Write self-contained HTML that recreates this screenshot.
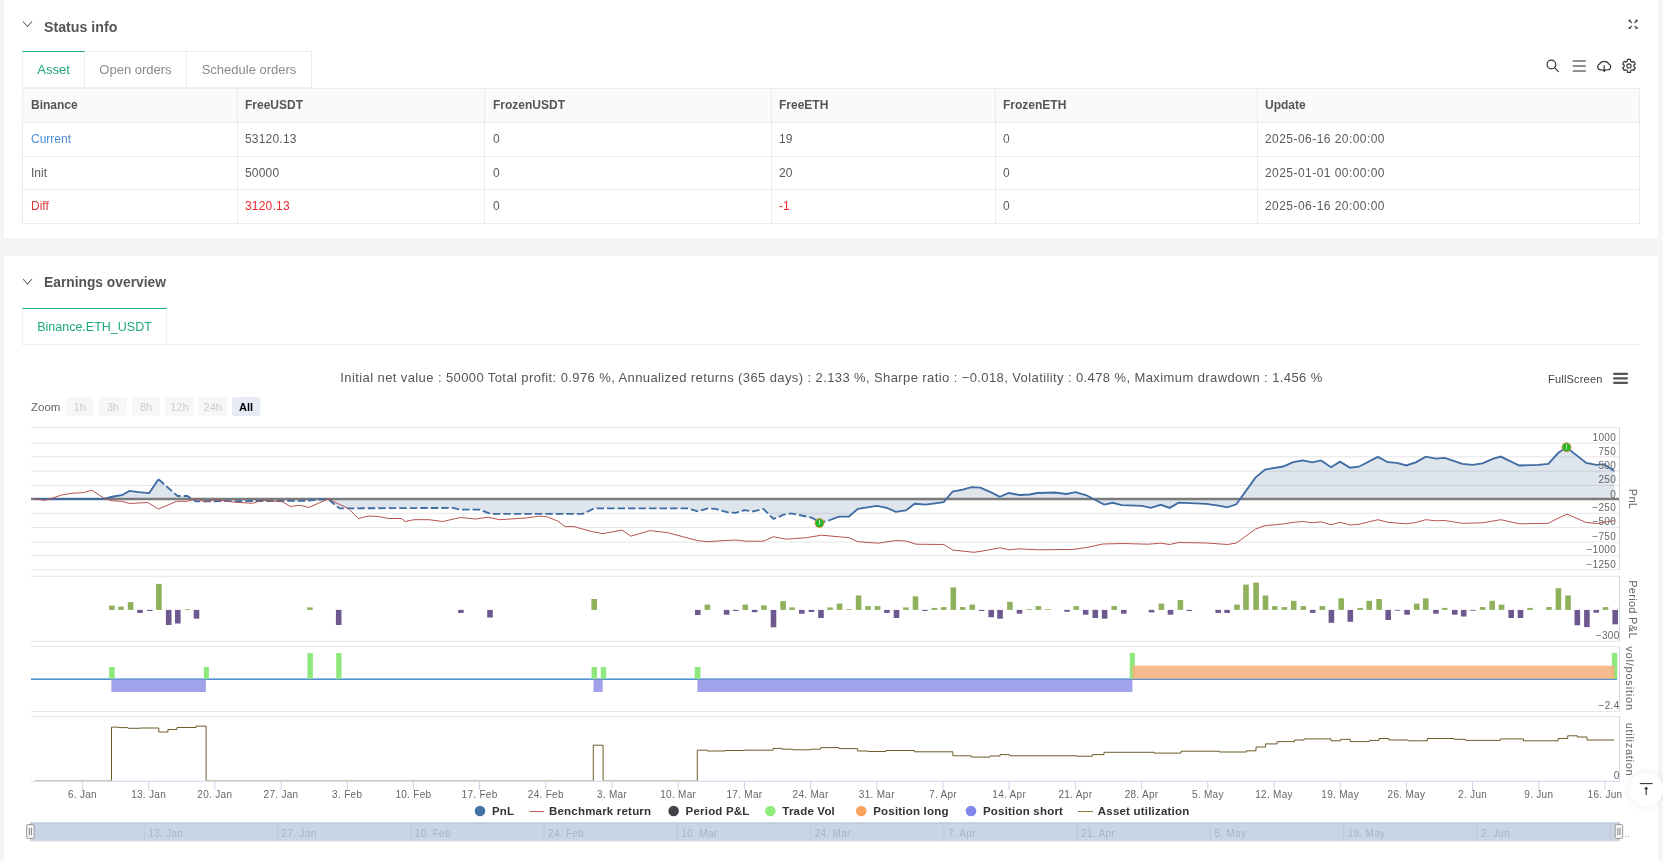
<!DOCTYPE html>
<html><head><meta charset="utf-8">
<style>
*{box-sizing:border-box;margin:0;padding:0}
html,body{-webkit-font-smoothing:antialiased;width:1663px;height:861px;overflow:hidden;background:#f4f5f7;font-family:"Liberation Sans",sans-serif;color:#555}
.card{position:absolute;left:4px;width:1654px;background:#fff;will-change:transform}
#c1{top:0;height:238px}
#c2{top:256px;height:620px}
.abs{position:absolute}
.title{position:absolute;font-size:13.8px;font-weight:bold;color:#555;white-space:nowrap;line-height:18px}
.tab{position:absolute;top:51px;height:37px;border:1px solid #eee;border-left:none;font-size:13px;color:#8a8a8a;line-height:35px;text-align:center;white-space:nowrap}
.tab.first{border-left:1px solid #eee}
.tab.act{color:#1fa67c;border-top:1px solid #1fae80}
.cell{position:absolute;font-size:12px;white-space:nowrap;line-height:14px;color:#5a5a5a}
.hd{font-weight:bold;color:#555}
.hl{position:absolute;height:1px;background:#ececec}
.vl{position:absolute;width:1px;background:#ececec}
.blue{color:#4a8fd8}.red{color:#f0262f}
svg text.yl{font-size:10px;fill:#666;letter-spacing:0.3px}
svg text.yt{font-size:11px;fill:#666;letter-spacing:0.3px}
svg text.xl{font-size:10px;fill:#666;letter-spacing:0.3px}
svg text.lg{font-size:11.5px;font-weight:bold;fill:#333;letter-spacing:0.2px}
svg text.nl{font-size:10px;fill:#a9b4c2;letter-spacing:0.3px}
</style></head><body>
<div class="card" id="c1">
  <div class="title" style="left:40px;top:17.5px;font-size:14.2px">Status info</div>
  <div class="tab first act" style="left:18px;width:63px">Asset</div>
  <div class="tab" style="left:81px;width:102px">Open orders</div>
  <div class="tab" style="left:183px;width:125px">Schedule orders</div>
  <!-- table -->
  <div class="abs" style="left:18px;top:88px;width:1618px;height:34px;background:#fafafa"></div>
  <div class="hl" style="left:18px;top:88px;width:1618px"></div>
  <div class="hl" style="left:18px;top:122px;width:1618px"></div>
  <div class="hl" style="left:18px;top:156px;width:1618px"></div>
  <div class="hl" style="left:18px;top:189px;width:1618px"></div>
  <div class="hl" style="left:18px;top:223px;width:1618px"></div>
  <div class="vl" style="left:18px;top:88px;height:136px"></div>
  <div class="vl" style="left:233px;top:88px;height:136px"></div>
  <div class="vl" style="left:480px;top:88px;height:136px"></div>
  <div class="vl" style="left:767px;top:88px;height:136px"></div>
  <div class="vl" style="left:991px;top:88px;height:136px"></div>
  <div class="vl" style="left:1253px;top:88px;height:136px"></div>
  <div class="vl" style="left:1635px;top:88px;height:136px"></div>
  <div class="cell hd" style="left:27px;top:98px">Binance</div>
  <div class="cell hd" style="left:241px;top:98px">FreeUSDT</div>
  <div class="cell hd" style="left:489px;top:98px">FrozenUSDT</div>
  <div class="cell hd" style="left:775px;top:98px">FreeETH</div>
  <div class="cell hd" style="left:999px;top:98px">FrozenETH</div>
  <div class="cell hd" style="left:1261px;top:98px">Update</div>

  <div class="cell blue" style="left:27px;top:132px">Current</div>
  <div class="cell" style="left:241px;top:132px;letter-spacing:0.2px">53120.13</div>
  <div class="cell" style="left:489px;top:132px">0</div>
  <div class="cell" style="left:775px;top:132px">19</div>
  <div class="cell" style="left:999px;top:132px">0</div>
  <div class="cell" style="left:1261px;top:132px;letter-spacing:0.45px">2025-06-16 20:00:00</div>

  <div class="cell" style="left:27px;top:166px">Init</div>
  <div class="cell" style="left:241px;top:166px;letter-spacing:0.2px">50000</div>
  <div class="cell" style="left:489px;top:166px">0</div>
  <div class="cell" style="left:775px;top:166px">20</div>
  <div class="cell" style="left:999px;top:166px">0</div>
  <div class="cell" style="left:1261px;top:166px;letter-spacing:0.45px">2025-01-01 00:00:00</div>

  <div class="cell" style="left:27px;top:199px;color:#d9363e">Diff</div>
  <div class="cell red" style="left:241px;top:199px;letter-spacing:0.2px">3120.13</div>
  <div class="cell" style="left:489px;top:199px">0</div>
  <div class="cell red" style="left:775px;top:199px">-1</div>
  <div class="cell" style="left:999px;top:199px">0</div>
  <div class="cell" style="left:1261px;top:199px;letter-spacing:0.45px">2025-06-16 20:00:00</div>
</div>
<div class="card" id="c2">
  <div class="title" style="left:40px;top:18px">Earnings overview</div>
  <div class="tab first act" style="left:18px;top:52px;width:145px;font-size:12.5px;line-height:37px;color:#1fa87c">Binance.ETH_USDT</div>
  <div class="abs" style="left:163px;top:88px;width:1473px;height:1px;background:#eee"></div>
</div>
<svg class="abs" style="left:0;top:0;will-change:transform" width="1663" height="861" viewBox="0 0 1663 861">
  <!-- chevrons -->
  <polyline points="23,21.5 27.5,26.5 32,21.5" fill="none" stroke="#666" stroke-width="1.1"/>
  <polyline points="23,279 27.5,284 32,279" fill="none" stroke="#666" stroke-width="1.1"/>
  <!-- fullscreen icon -->
  <g stroke="#444" stroke-width="1.2" fill="#444">
    <line x1="1629.3" y1="20.3" x2="1632" y2="23"/><path d="M1628.5 19.5 L1631.2 19.8 L1628.8 22.2 Z" stroke="none"/>
    <line x1="1637" y1="20.3" x2="1634.5" y2="23"/><path d="M1637.8 19.5 L1635.1 19.8 L1637.5 22.2 Z" stroke="none"/>
    <line x1="1629.3" y1="28.3" x2="1631.8" y2="25.8"/><path d="M1628.5 29.1 L1631.2 28.8 L1628.8 26.4 Z" stroke="none"/>
    <line x1="1637" y1="28.3" x2="1634.6" y2="25.8"/><path d="M1637.8 29.1 L1635.1 28.8 L1637.5 26.4 Z" stroke="none"/>
  </g>
  <!-- toolbar icons -->
  <g fill="none" stroke="#3a3a3a" stroke-width="1.2">
    <circle cx="1551.4" cy="64.5" r="4.3"/><line x1="1554.5" y1="67.6" x2="1558.7" y2="71.8"/>
  </g>
  <g stroke="#555" stroke-width="1.3"><line x1="1572.8" y1="61" x2="1585.8" y2="61"/><line x1="1572.8" y1="66" x2="1585.8" y2="66"/><line x1="1572.8" y1="71" x2="1585.8" y2="71"/></g>
  <g fill="none" stroke="#3a3a3a" stroke-width="1.2">
    <path d="M1602.2 69.8 H1600.6 A2.9 2.9 0 0 1 1599.3 64.3 A5.6 5.6 0 0 1 1609.1 64.3 A2.9 2.9 0 0 1 1607.8 69.8 H1606.3"/>
    <path d="M1604.2 65.2 V71.3 M1602.5 69.5 L1604.2 71.3 L1605.9 69.5"/>
    <path d="M1627.52 59.47 L1630.48 59.47 L1630.68 61.30 L1632.15 62.15 L1633.83 61.40 L1635.31 63.97 L1633.83 65.05 L1633.83 66.75 L1635.31 67.83 L1633.83 70.40 L1632.15 69.65 L1630.68 70.50 L1630.48 72.33 L1627.52 72.33 L1627.32 70.50 L1625.85 69.65 L1624.17 70.40 L1622.69 67.83 L1624.17 66.75 L1624.17 65.05 L1622.69 63.97 L1624.17 61.40 L1625.85 62.15 L1627.32 61.30 Z" stroke-linejoin="round"/>
    <circle cx="1629" cy="65.9" r="2.1"/>
  </g>
  <text x="831.5" y="382" text-anchor="middle" style="font-size:13px;fill:#555;letter-spacing:0.4px">Initial net value : 50000 Total profit: 0.976 %, Annualized returns (365 days) : 2.133 %, Sharpe ratio : −0.018, Volatility : 0.478 %, Maximum drawdown : 1.456 %</text>
  <text x="1548" y="383" style="font-size:11px;fill:#444;letter-spacing:0.2px">FullScreen</text>
  <g stroke="#555" stroke-width="2.2" stroke-linecap="round"><line x1="1614" y1="373.8" x2="1627" y2="373.8"/><line x1="1614" y1="378.3" x2="1627" y2="378.3"/><line x1="1614" y1="382.8" x2="1627" y2="382.8"/></g>
  <text x="31" y="411" style="font-size:11.5px;fill:#666">Zoom</text>
  <g style="font-size:11px">
    <rect x="65.6" y="397" width="28.3" height="19" rx="2" fill="#f7f7f7"/><text x="79.7" y="410.5" text-anchor="middle" fill="#ccc">1h</text>
    <rect x="98.7" y="397" width="28.3" height="19" rx="2" fill="#f7f7f7"/><text x="112.8" y="410.5" text-anchor="middle" fill="#ccc">3h</text>
    <rect x="132" y="397" width="28.3" height="19" rx="2" fill="#f7f7f7"/><text x="146.1" y="410.5" text-anchor="middle" fill="#ccc">8h</text>
    <rect x="165.3" y="397" width="28.3" height="19" rx="2" fill="#f7f7f7"/><text x="179.4" y="410.5" text-anchor="middle" fill="#ccc">12h</text>
    <rect x="198.6" y="397" width="28.3" height="19" rx="2" fill="#f7f7f7"/><text x="212.7" y="410.5" text-anchor="middle" fill="#ccc">24h</text>
    <rect x="232" y="397" width="28.3" height="19" rx="2" fill="#e6ebf5"/><text x="246.1" y="410.5" text-anchor="middle" fill="#000" font-weight="bold">All</text>
  </g>
<line x1="31" y1="427.5" x2="1619.5" y2="427.5" stroke="#e6e6e6" stroke-width="1"/>
<line x1="31" y1="443.2" x2="1619.5" y2="443.2" stroke="#e6e6e6" stroke-width="1"/>
<line x1="31" y1="456.8" x2="1619.5" y2="456.8" stroke="#e6e6e6" stroke-width="1"/>
<line x1="31" y1="471.2" x2="1619.5" y2="471.2" stroke="#e6e6e6" stroke-width="1"/>
<line x1="31" y1="485.4" x2="1619.5" y2="485.4" stroke="#e6e6e6" stroke-width="1"/>
<line x1="31" y1="513.3" x2="1619.5" y2="513.3" stroke="#e6e6e6" stroke-width="1"/>
<line x1="31" y1="527.4" x2="1619.5" y2="527.4" stroke="#e6e6e6" stroke-width="1"/>
<line x1="31" y1="542.0" x2="1619.5" y2="542.0" stroke="#e6e6e6" stroke-width="1"/>
<line x1="31" y1="555.7" x2="1619.5" y2="555.7" stroke="#e6e6e6" stroke-width="1"/>
<line x1="31" y1="569.6" x2="1619.5" y2="569.6" stroke="#e6e6e6" stroke-width="1"/>
<polygon points="34.0,499.0 34.0,499.0 103.3,499.0 113.4,496.5 121.8,495.2 129.5,490.9 138.7,492.2 149.2,493.1 158.5,479.3 177.6,496.0 187.2,496.0 195.9,501.3 304.1,500.8 328.1,499.0 339.4,508.4 452.8,507.9 460.4,509.6 479.3,509.6 490.7,513.9 582.9,513.9 594.2,508.4 687.7,508.4 697.8,511.4 707.9,508.4 715.5,508.9 728.0,512.4 735.7,512.9 744.5,510.2 753.3,511.4 763.4,508.9 773.5,519.0 783.6,514.7 791.2,513.4 806.4,516.5 812.7,518.0 819.5,523.0 828.8,520.5 838.9,516.7 849.0,516.5 857.9,508.9 876.8,505.9 886.9,507.9 895.8,511.9 905.9,510.4 914.7,503.8 926.0,504.6 943.7,502.1 952.6,491.5 962.7,489.7 971.5,487.2 980.4,487.7 991.7,492.7 999.8,496.8 1008.9,493.0 1019.5,495.0 1029.6,494.5 1037.2,493.0 1054.8,492.5 1066.2,494.0 1075.6,492.2 1086.4,495.3 1104.1,504.6 1112.9,502.8 1121.8,505.1 1142.0,505.9 1150.8,507.9 1160.9,504.8 1169.7,507.9 1178.6,502.6 1206.4,503.8 1220.0,505.9 1227.1,507.4 1236.4,504.3 1255.4,477.6 1265.0,469.5 1283.1,466.5 1293.2,462.2 1302.8,460.4 1312.2,462.4 1321.0,460.4 1331.1,467.2 1340.0,461.7 1350.0,467.7 1358.9,466.7 1377.8,456.9 1387.9,462.2 1396.8,462.9 1406.4,465.5 1415.7,462.4 1425.8,456.6 1435.9,458.6 1444.7,457.9 1462.4,463.9 1472.5,464.9 1482.6,463.4 1492.7,458.9 1500.8,456.6 1519.2,465.5 1538.2,464.9 1548.3,463.9 1558.4,452.8 1566.5,447.3 1586.2,462.9 1596.3,464.9 1603.8,464.2 1614.4,471.0 1614.4,499.0" fill="rgb(60,100,150)" fill-opacity="0.17"/>
<line x1="31" y1="499" x2="1619.5" y2="499" stroke="#7b7b7b" stroke-width="2.6"/>
<polyline points="34.0,499.0 103.3,499.0 113.4,496.5 121.8,495.2 129.5,490.9 138.7,492.2 149.2,493.1 158.5,479.3" fill="none" stroke="#3e6ca3" stroke-width="1.85"/>
<polyline points="158.5,479.3 177.6,496.0 187.2,496.0 195.9,501.3 304.1,500.8 328.1,499.0 339.4,508.4 452.8,507.9 460.4,509.6 479.3,509.6 490.7,513.9 582.9,513.9 594.2,508.4 687.7,508.4 697.8,511.4 707.9,508.4 715.5,508.9 728.0,512.4 735.7,512.9 744.5,510.2 753.3,511.4 763.4,508.9 773.5,519.0 783.6,514.7 791.2,513.4 806.4,516.5 812.7,518.0 819.5,523.0 828.8,520.5" fill="none" stroke="#3e6ca3" stroke-width="1.85" stroke-dasharray="7.5,3"/>
<polyline points="828.8,520.5 838.9,516.7 849.0,516.5 857.9,508.9 876.8,505.9 886.9,507.9 895.8,511.9 905.9,510.4 914.7,503.8 926.0,504.6 943.7,502.1 952.6,491.5 962.7,489.7 971.5,487.2 980.4,487.7 991.7,492.7 999.8,496.8 1008.9,493.0 1019.5,495.0 1029.6,494.5 1037.2,493.0 1054.8,492.5 1066.2,494.0 1075.6,492.2 1086.4,495.3 1104.1,504.6 1112.9,502.8 1121.8,505.1 1142.0,505.9 1150.8,507.9 1160.9,504.8 1169.7,507.9 1178.6,502.6 1206.4,503.8 1220.0,505.9 1227.1,507.4 1236.4,504.3 1255.4,477.6 1265.0,469.5 1283.1,466.5 1293.2,462.2 1302.8,460.4 1312.2,462.4 1321.0,460.4 1331.1,467.2 1340.0,461.7 1350.0,467.7 1358.9,466.7 1377.8,456.9 1387.9,462.2 1396.8,462.9 1406.4,465.5 1415.7,462.4 1425.8,456.6 1435.9,458.6 1444.7,457.9 1462.4,463.9 1472.5,464.9 1482.6,463.4 1492.7,458.9 1500.8,456.6 1519.2,465.5 1538.2,464.9 1548.3,463.9 1558.4,452.8 1566.5,447.3 1586.2,462.9 1596.3,464.9 1603.8,464.2 1614.4,471.0" fill="none" stroke="#3e6ca3" stroke-width="1.85"/>
<polyline points="34.0,499.0 45.3,500.3 62.9,494.7 73.0,493.2 83.1,492.7 91.9,490.2 103.5,497.9 112.1,500.8 121.8,501.3 129.5,503.5 147.7,502.5 158.5,509.0 176.6,501.3 187.2,501.3 195.9,498.6 205.5,501.8 215.1,499.6 234.4,502.2 252.3,503.3 262.4,500.3 282.6,501.8 290.2,506.4 300.3,505.4 309.1,507.4 328.1,499.0 348.3,508.4 358.4,518.5 368.5,516.0 378.6,516.5 388.7,518.5 401.3,518.5 405.1,521.5 414.0,519.7 429.1,519.7 442.7,521.5 460.4,517.5 475.6,519.0 488.2,517.2 499.5,519.7 526.0,518.0 538.7,516.2 546.3,516.5 557.6,521.0 565.2,526.6 574.0,526.6 591.7,531.6 603.0,533.6 622.0,530.1 630.9,536.2 649.8,530.6 667.5,532.6 697.8,540.7 707.9,541.7 723.0,540.7 735.7,540.0 745.8,541.2 763.4,541.2 773.5,536.7 786.2,539.2 806.4,537.7 821.5,535.2 849.0,537.7 857.9,541.7 878.1,543.2 895.8,540.5 905.9,541.0 916.0,544.2 943.7,544.5 952.6,550.0 974.0,552.3 984.1,550.8 999.8,547.8 1009.4,549.8 1019.5,548.8 1037.2,549.8 1072.5,549.5 1087.7,547.3 1102.8,544.0 1123.0,543.5 1148.3,544.2 1160.9,543.2 1169.7,544.5 1178.6,542.5 1206.4,543.0 1227.6,544.5 1236.4,543.0 1255.4,529.1 1265.0,525.6 1283.1,524.0 1293.2,522.3 1302.8,521.5 1312.2,522.8 1321.0,521.8 1331.1,524.8 1340.0,522.3 1350.0,525.0 1358.9,524.3 1377.8,519.7 1387.9,522.3 1406.4,523.8 1415.7,522.5 1425.8,519.7 1435.9,520.8 1444.7,520.5 1462.4,523.3 1482.6,522.8 1500.8,519.7 1519.2,523.8 1548.3,523.3 1558.4,518.0 1567.2,514.2 1586.2,522.5 1596.3,523.5 1614.4,520.5" fill="none" stroke="#b5524f" stroke-width="1"/>
<circle cx="819.5" cy="523" r="4.5" fill="#22b82a" stroke="#f08040" stroke-width="0.8"/>
<line x1="819.5" y1="520" x2="819.5" y2="525" stroke="#e8f5e8" stroke-width="0.8"/>
<circle cx="1566.5" cy="447.3" r="4.5" fill="#22b82a" stroke="#f08040" stroke-width="0.8"/>
<line x1="1566.5" y1="444.3" x2="1566.5" y2="449.3" stroke="#e8f5e8" stroke-width="0.8"/>
<line x1="1619.5" y1="427" x2="1619.5" y2="570" stroke="#d0d8ea" stroke-width="1"/>
<text x="1616" y="441" text-anchor="end" class="yl">1000</text>
<text x="1616" y="454.5" text-anchor="end" class="yl">750</text>
<text x="1616" y="469" text-anchor="end" class="yl">500</text>
<text x="1616" y="483" text-anchor="end" class="yl">250</text>
<text x="1616" y="497.5" text-anchor="end" class="yl">0</text>
<text x="1616" y="511" text-anchor="end" class="yl">−250</text>
<text x="1616" y="525" text-anchor="end" class="yl">−500</text>
<text x="1616" y="539.5" text-anchor="end" class="yl">−750</text>
<text x="1616" y="553" text-anchor="end" class="yl">−1000</text>
<text x="1616" y="567.5" text-anchor="end" class="yl">−1250</text>
<text transform="translate(1629,499) rotate(90)" text-anchor="middle" class="yt">PnL</text>
<line x1="31" y1="576.3" x2="1619.5" y2="576.3" stroke="#e6e6e6" stroke-width="1"/>
<line x1="31" y1="641.2" x2="1619.5" y2="641.2" stroke="#e6e6e6" stroke-width="1"/>
<line x1="1619.5" y1="576" x2="1619.5" y2="641" stroke="#d0d8ea" stroke-width="1"/>
<rect x="109.1" y="605.6" width="5.6" height="4.3" fill="#90b15c"/>
<rect x="118.2" y="606.6" width="5.6" height="3.3" fill="#90b15c"/>
<rect x="127.8" y="602.1" width="5.6" height="7.8" fill="#90b15c"/>
<rect x="137.2" y="609.9" width="5.6" height="3.0" fill="#6e5890"/>
<rect x="147.0" y="609.9" width="5.6" height="1.1" fill="#6e5890"/>
<rect x="156.1" y="583.9" width="5.6" height="26.0" fill="#90b15c"/>
<rect x="165.9" y="609.9" width="5.6" height="15.1" fill="#6e5890"/>
<rect x="175.0" y="609.9" width="5.6" height="13.6" fill="#6e5890"/>
<rect x="184.6" y="609.1" width="5.6" height="0.8" fill="#90b15c"/>
<rect x="193.7" y="609.9" width="5.6" height="8.8" fill="#6e5890"/>
<rect x="307.1" y="607.4" width="5.6" height="2.5" fill="#90b15c"/>
<rect x="335.9" y="609.9" width="5.6" height="15.1" fill="#6e5890"/>
<rect x="458.1" y="609.9" width="5.6" height="3.0" fill="#6e5890"/>
<rect x="487.2" y="609.9" width="5.6" height="7.6" fill="#6e5890"/>
<rect x="591.4" y="599.0" width="5.6" height="10.9" fill="#90b15c"/>
<rect x="695.0" y="609.9" width="5.6" height="5.1" fill="#6e5890"/>
<rect x="704.6" y="604.6" width="5.6" height="5.3" fill="#90b15c"/>
<rect x="723.8" y="609.9" width="5.6" height="4.8" fill="#6e5890"/>
<rect x="732.9" y="609.9" width="5.6" height="1.1" fill="#6e5890"/>
<rect x="742.5" y="604.6" width="5.6" height="5.3" fill="#90b15c"/>
<rect x="751.8" y="609.9" width="5.6" height="2.3" fill="#6e5890"/>
<rect x="761.1" y="605.4" width="5.6" height="4.5" fill="#90b15c"/>
<rect x="770.7" y="609.9" width="5.6" height="17.4" fill="#6e5890"/>
<rect x="780.3" y="601.1" width="5.6" height="8.8" fill="#90b15c"/>
<rect x="789.2" y="607.4" width="5.6" height="2.5" fill="#90b15c"/>
<rect x="799.0" y="609.9" width="5.6" height="3.8" fill="#6e5890"/>
<rect x="808.6" y="609.9" width="5.6" height="2.1" fill="#6e5890"/>
<rect x="818.2" y="609.9" width="5.6" height="8.1" fill="#6e5890"/>
<rect x="827.3" y="607.4" width="5.6" height="2.5" fill="#90b15c"/>
<rect x="836.7" y="603.6" width="5.6" height="6.3" fill="#90b15c"/>
<rect x="846.2" y="609.1" width="5.6" height="0.8" fill="#90b15c"/>
<rect x="855.8" y="595.5" width="5.6" height="14.4" fill="#90b15c"/>
<rect x="865.2" y="606.1" width="5.6" height="3.8" fill="#90b15c"/>
<rect x="874.8" y="606.1" width="5.6" height="3.8" fill="#90b15c"/>
<rect x="884.1" y="609.9" width="5.6" height="3.0" fill="#6e5890"/>
<rect x="893.7" y="609.9" width="5.6" height="8.1" fill="#6e5890"/>
<rect x="903.1" y="607.4" width="5.6" height="2.5" fill="#90b15c"/>
<rect x="912.7" y="596.3" width="5.6" height="13.6" fill="#90b15c"/>
<rect x="922.0" y="609.9" width="5.6" height="1.1" fill="#6e5890"/>
<rect x="931.6" y="607.9" width="5.6" height="2.0" fill="#90b15c"/>
<rect x="940.9" y="607.1" width="5.6" height="2.8" fill="#90b15c"/>
<rect x="950.5" y="587.4" width="5.6" height="22.5" fill="#90b15c"/>
<rect x="959.9" y="607.1" width="5.6" height="2.8" fill="#90b15c"/>
<rect x="969.5" y="604.6" width="5.6" height="5.3" fill="#90b15c"/>
<rect x="978.8" y="609.9" width="5.6" height="1.1" fill="#6e5890"/>
<rect x="988.4" y="609.9" width="5.6" height="7.3" fill="#6e5890"/>
<rect x="997.2" y="609.9" width="5.6" height="8.8" fill="#6e5890"/>
<rect x="1007.1" y="601.8" width="5.6" height="8.1" fill="#90b15c"/>
<rect x="1016.7" y="609.9" width="5.6" height="3.8" fill="#6e5890"/>
<rect x="1026.3" y="609.1" width="5.6" height="0.8" fill="#90b15c"/>
<rect x="1035.6" y="606.1" width="5.6" height="3.8" fill="#90b15c"/>
<rect x="1045.2" y="609.1" width="5.6" height="0.8" fill="#90b15c"/>
<rect x="1064.2" y="609.9" width="5.6" height="1.8" fill="#6e5890"/>
<rect x="1073.5" y="606.1" width="5.6" height="3.8" fill="#90b15c"/>
<rect x="1082.9" y="609.9" width="5.6" height="4.8" fill="#6e5890"/>
<rect x="1092.5" y="609.9" width="5.6" height="8.1" fill="#6e5890"/>
<rect x="1101.8" y="609.9" width="5.6" height="8.8" fill="#6e5890"/>
<rect x="1111.4" y="606.1" width="5.6" height="3.8" fill="#90b15c"/>
<rect x="1121.0" y="609.9" width="5.6" height="3.8" fill="#6e5890"/>
<rect x="1148.8" y="609.9" width="5.6" height="2.5" fill="#6e5890"/>
<rect x="1158.6" y="603.6" width="5.6" height="6.3" fill="#90b15c"/>
<rect x="1167.7" y="609.9" width="5.6" height="4.8" fill="#6e5890"/>
<rect x="1177.6" y="600.0" width="5.6" height="9.9" fill="#90b15c"/>
<rect x="1186.6" y="609.9" width="5.6" height="1.1" fill="#6e5890"/>
<rect x="1215.4" y="609.9" width="5.6" height="3.0" fill="#6e5890"/>
<rect x="1224.3" y="609.9" width="5.6" height="3.0" fill="#6e5890"/>
<rect x="1234.2" y="604.6" width="5.6" height="5.3" fill="#90b15c"/>
<rect x="1243.2" y="584.6" width="5.6" height="25.3" fill="#90b15c"/>
<rect x="1253.3" y="582.6" width="5.6" height="27.3" fill="#90b15c"/>
<rect x="1262.7" y="595.5" width="5.6" height="14.4" fill="#90b15c"/>
<rect x="1272.0" y="606.1" width="5.6" height="3.8" fill="#90b15c"/>
<rect x="1281.6" y="607.1" width="5.6" height="2.8" fill="#90b15c"/>
<rect x="1290.9" y="600.8" width="5.6" height="9.1" fill="#90b15c"/>
<rect x="1300.5" y="606.1" width="5.6" height="3.8" fill="#90b15c"/>
<rect x="1309.9" y="609.9" width="5.6" height="3.0" fill="#6e5890"/>
<rect x="1319.5" y="606.1" width="5.6" height="3.8" fill="#90b15c"/>
<rect x="1328.6" y="609.9" width="5.6" height="12.9" fill="#6e5890"/>
<rect x="1338.4" y="598.3" width="5.6" height="11.6" fill="#90b15c"/>
<rect x="1347.5" y="609.9" width="5.6" height="11.9" fill="#6e5890"/>
<rect x="1357.4" y="607.9" width="5.6" height="2.0" fill="#90b15c"/>
<rect x="1366.4" y="600.8" width="5.6" height="9.1" fill="#90b15c"/>
<rect x="1376.3" y="599.0" width="5.6" height="10.9" fill="#90b15c"/>
<rect x="1385.4" y="609.9" width="5.6" height="10.1" fill="#6e5890"/>
<rect x="1394.7" y="609.9" width="5.6" height="0.8" fill="#6e5890"/>
<rect x="1404.3" y="609.9" width="5.6" height="4.8" fill="#6e5890"/>
<rect x="1413.9" y="603.6" width="5.6" height="6.3" fill="#90b15c"/>
<rect x="1423.0" y="598.3" width="5.6" height="11.6" fill="#90b15c"/>
<rect x="1433.1" y="609.9" width="5.6" height="3.8" fill="#6e5890"/>
<rect x="1441.9" y="607.9" width="5.6" height="2.0" fill="#90b15c"/>
<rect x="1452.0" y="609.9" width="5.6" height="4.8" fill="#6e5890"/>
<rect x="1460.9" y="609.9" width="5.6" height="6.6" fill="#6e5890"/>
<rect x="1470.2" y="609.9" width="5.6" height="0.8" fill="#6e5890"/>
<rect x="1479.8" y="607.1" width="5.6" height="2.8" fill="#90b15c"/>
<rect x="1489.4" y="600.8" width="5.6" height="9.1" fill="#90b15c"/>
<rect x="1498.8" y="604.6" width="5.6" height="5.3" fill="#90b15c"/>
<rect x="1508.4" y="609.9" width="5.6" height="8.1" fill="#6e5890"/>
<rect x="1517.7" y="609.9" width="5.6" height="8.1" fill="#6e5890"/>
<rect x="1527.3" y="607.9" width="5.6" height="2.0" fill="#90b15c"/>
<rect x="1546.2" y="607.1" width="5.6" height="2.8" fill="#90b15c"/>
<rect x="1555.6" y="588.2" width="5.6" height="21.7" fill="#90b15c"/>
<rect x="1565.2" y="595.5" width="5.6" height="14.4" fill="#90b15c"/>
<rect x="1574.5" y="609.9" width="5.6" height="15.4" fill="#6e5890"/>
<rect x="1584.1" y="609.9" width="5.6" height="17.2" fill="#6e5890"/>
<rect x="1593.5" y="609.9" width="5.6" height="2.8" fill="#6e5890"/>
<rect x="1602.8" y="607.1" width="5.6" height="2.8" fill="#90b15c"/>
<rect x="1612.4" y="609.9" width="5.6" height="14.4" fill="#6e5890"/>
<text x="1619.5" y="638.5" text-anchor="end" class="yl">−300</text>
<text transform="translate(1629,609.5) rotate(90)" text-anchor="middle" class="yt">Period P&amp;L</text>
<line x1="31" y1="646.3" x2="1619.5" y2="646.3" stroke="#e6e6e6" stroke-width="1"/>
<line x1="31" y1="711.5" x2="1619.5" y2="711.5" stroke="#e6e6e6" stroke-width="1"/>
<line x1="1619.5" y1="646" x2="1619.5" y2="711" stroke="#d0d8ea" stroke-width="1"/>
<line x1="31" y1="678.5" x2="1617" y2="678.5" stroke="#9ad2ee" stroke-width="1"/>
<line x1="31" y1="679.4" x2="1617" y2="679.4" stroke="#5a8fd0" stroke-width="1.1"/>
<rect x="109.1" y="667" width="5.6" height="11.8" fill="#8ee87d"/>
<rect x="203.8" y="667" width="5.1" height="11.8" fill="#8ee87d"/>
<rect x="307.4" y="653.1" width="5.5" height="25.7" fill="#8ee87d"/>
<rect x="336.2" y="653.1" width="5.3" height="25.7" fill="#8ee87d"/>
<rect x="591.6" y="667" width="5.4" height="11.8" fill="#8ee87d"/>
<rect x="600.8" y="667" width="5.4" height="11.8" fill="#8ee87d"/>
<rect x="694.7" y="667" width="5.8" height="11.8" fill="#8ee87d"/>
<rect x="1129.8" y="652.9" width="5.1" height="25.9" fill="#8ee87d"/>
<rect x="1611.8" y="652.9" width="5.5" height="25.9" fill="#8ee87d"/>
<rect x="111.4" y="679.3" width="94.5" height="12.7" fill="#8f92e6" opacity="0.85"/>
<rect x="593.5" y="679.3" width="9.2" height="12.7" fill="#8f92e6" opacity="0.85"/>
<rect x="697.4" y="679.3" width="435.0" height="12.7" fill="#8f92e6" opacity="0.85"/>
<rect x="1132.3" y="665.7" width="482.3" height="13.1" fill="#f6b07a" opacity="0.85"/>
<text x="1619.5" y="708.5" text-anchor="end" class="yl">−2.4</text>
<text transform="translate(1625.8,678.5) rotate(90)" text-anchor="middle" class="yt" style="letter-spacing:0.8px">vol/position</text>
<line x1="31" y1="716.6" x2="1619.5" y2="716.6" stroke="#e6e6e6" stroke-width="1"/>
<line x1="1619.5" y1="716" x2="1619.5" y2="781" stroke="#d0d8ea" stroke-width="1"/>
<line x1="35" y1="780.5" x2="111.5" y2="780.5" stroke="#cfc6a3" stroke-width="1"/>
<line x1="206.1" y1="780.5" x2="593.3" y2="780.5" stroke="#cfc6a3" stroke-width="1"/>
<line x1="603.1" y1="780.5" x2="697.3" y2="780.5" stroke="#cfc6a3" stroke-width="1"/>
<polyline points="111.5,780.6 111.5,727.1 118.0,727.1 118.0,727.6 128.0,727.6 128.0,728.3 140.0,728.3 140.0,728.0 158.8,728.0 158.8,732.0 167.9,732.0 167.9,729.5 177.0,729.5 177.0,727.5 196.0,727.5 196.0,726.1 206.1,726.1 206.1,780.6" fill="none" stroke="#6b5c28" stroke-width="1"/>
<polyline points="593.3,780.6 593.3,745.2 603.1,745.2 603.1,780.6" fill="none" stroke="#6b5c28" stroke-width="1"/>
<polyline points="697.3,780.6 697.3,750.2 707.4,750.2 707.4,751.0 725.3,751.0 725.3,750.5 744.0,750.5 744.0,750.2 773.0,750.2 773.0,748.4 782.2,748.4 782.2,749.2 792.8,749.2 792.8,749.8 811.0,749.8 811.0,749.2 820.6,749.2 820.6,747.6 839.0,747.6 839.0,748.6 857.6,748.6 857.6,751.0 868.2,751.0 868.2,751.5 886.0,751.5 886.0,750.5 914.5,750.5 914.5,751.8 952.9,751.8 952.9,755.8 971.4,755.8 971.4,757.1 989.9,757.1 989.9,756.0 1000.0,756.0 1000.0,754.6 1009.6,754.6 1009.6,755.8 1077.0,755.8 1077.0,756.2 1092.4,756.2 1092.4,754.6 1104.0,754.6 1104.0,752.3 1154.0,752.3 1154.0,753.1 1181.0,753.1 1181.0,751.2 1219.4,751.2 1219.4,752.0 1246.3,752.0 1246.3,750.8 1256.0,750.8 1256.0,747.0 1265.6,747.0 1265.6,743.9 1277.0,743.9 1277.0,741.6 1294.5,741.6 1294.5,740.0 1304.0,740.0 1304.0,738.9 1331.0,738.9 1331.0,740.8 1340.6,740.8 1340.6,739.3 1350.3,739.3 1350.3,741.6 1369.5,741.6 1369.5,740.4 1379.0,740.4 1379.0,738.5 1388.8,738.5 1388.8,740.0 1408.0,740.0 1408.0,740.8 1427.3,740.8 1427.3,738.5 1454.2,738.5 1454.2,739.3 1465.7,739.3 1465.7,740.4 1500.4,740.4 1500.4,738.9 1523.5,738.9 1523.5,740.8 1558.1,740.8 1558.1,738.5 1567.7,738.5 1567.7,735.8 1577.4,735.8 1577.4,737.0 1587.0,737.0 1587.0,740.0 1614.0,740.0 1614.0,739.6" fill="none" stroke="#6b5c28" stroke-width="1"/>
<line x1="31" y1="781.3" x2="1619.5" y2="781.3" stroke="#ccd6eb" stroke-width="1"/>
<text x="1619.5" y="779" text-anchor="end" class="yl">0</text>
<text transform="translate(1625.8,749.5) rotate(90)" text-anchor="middle" class="yt" style="letter-spacing:0.7px">utilization</text>
<line x1="82.4" y1="781.3" x2="82.4" y2="790" stroke="#ccd6eb" stroke-width="1"/>
<text x="82.4" y="798" text-anchor="middle" class="xl">6. Jan</text>
<line x1="148.6" y1="781.3" x2="148.6" y2="790" stroke="#ccd6eb" stroke-width="1"/>
<text x="148.6" y="798" text-anchor="middle" class="xl">13. Jan</text>
<line x1="214.8" y1="781.3" x2="214.8" y2="790" stroke="#ccd6eb" stroke-width="1"/>
<text x="214.8" y="798" text-anchor="middle" class="xl">20. Jan</text>
<line x1="281.0" y1="781.3" x2="281.0" y2="790" stroke="#ccd6eb" stroke-width="1"/>
<text x="281.0" y="798" text-anchor="middle" class="xl">27. Jan</text>
<line x1="347.2" y1="781.3" x2="347.2" y2="790" stroke="#ccd6eb" stroke-width="1"/>
<text x="347.2" y="798" text-anchor="middle" class="xl">3. Feb</text>
<line x1="413.4" y1="781.3" x2="413.4" y2="790" stroke="#ccd6eb" stroke-width="1"/>
<text x="413.4" y="798" text-anchor="middle" class="xl">10. Feb</text>
<line x1="479.6" y1="781.3" x2="479.6" y2="790" stroke="#ccd6eb" stroke-width="1"/>
<text x="479.6" y="798" text-anchor="middle" class="xl">17. Feb</text>
<line x1="545.8" y1="781.3" x2="545.8" y2="790" stroke="#ccd6eb" stroke-width="1"/>
<text x="545.8" y="798" text-anchor="middle" class="xl">24. Feb</text>
<line x1="612.0" y1="781.3" x2="612.0" y2="790" stroke="#ccd6eb" stroke-width="1"/>
<text x="612.0" y="798" text-anchor="middle" class="xl">3. Mar</text>
<line x1="678.2" y1="781.3" x2="678.2" y2="790" stroke="#ccd6eb" stroke-width="1"/>
<text x="678.2" y="798" text-anchor="middle" class="xl">10. Mar</text>
<line x1="744.4" y1="781.3" x2="744.4" y2="790" stroke="#ccd6eb" stroke-width="1"/>
<text x="744.4" y="798" text-anchor="middle" class="xl">17. Mar</text>
<line x1="810.6" y1="781.3" x2="810.6" y2="790" stroke="#ccd6eb" stroke-width="1"/>
<text x="810.6" y="798" text-anchor="middle" class="xl">24. Mar</text>
<line x1="876.8" y1="781.3" x2="876.8" y2="790" stroke="#ccd6eb" stroke-width="1"/>
<text x="876.8" y="798" text-anchor="middle" class="xl">31. Mar</text>
<line x1="943.0" y1="781.3" x2="943.0" y2="790" stroke="#ccd6eb" stroke-width="1"/>
<text x="943.0" y="798" text-anchor="middle" class="xl">7. Apr</text>
<line x1="1009.2" y1="781.3" x2="1009.2" y2="790" stroke="#ccd6eb" stroke-width="1"/>
<text x="1009.2" y="798" text-anchor="middle" class="xl">14. Apr</text>
<line x1="1075.4" y1="781.3" x2="1075.4" y2="790" stroke="#ccd6eb" stroke-width="1"/>
<text x="1075.4" y="798" text-anchor="middle" class="xl">21. Apr</text>
<line x1="1141.6" y1="781.3" x2="1141.6" y2="790" stroke="#ccd6eb" stroke-width="1"/>
<text x="1141.6" y="798" text-anchor="middle" class="xl">28. Apr</text>
<line x1="1207.8" y1="781.3" x2="1207.8" y2="790" stroke="#ccd6eb" stroke-width="1"/>
<text x="1207.8" y="798" text-anchor="middle" class="xl">5. May</text>
<line x1="1274.0" y1="781.3" x2="1274.0" y2="790" stroke="#ccd6eb" stroke-width="1"/>
<text x="1274.0" y="798" text-anchor="middle" class="xl">12. May</text>
<line x1="1340.2" y1="781.3" x2="1340.2" y2="790" stroke="#ccd6eb" stroke-width="1"/>
<text x="1340.2" y="798" text-anchor="middle" class="xl">19. May</text>
<line x1="1406.4" y1="781.3" x2="1406.4" y2="790" stroke="#ccd6eb" stroke-width="1"/>
<text x="1406.4" y="798" text-anchor="middle" class="xl">26. May</text>
<line x1="1472.6" y1="781.3" x2="1472.6" y2="790" stroke="#ccd6eb" stroke-width="1"/>
<text x="1472.6" y="798" text-anchor="middle" class="xl">2. Jun</text>
<line x1="1538.8" y1="781.3" x2="1538.8" y2="790" stroke="#ccd6eb" stroke-width="1"/>
<text x="1538.8" y="798" text-anchor="middle" class="xl">9. Jun</text>
<line x1="1605.0" y1="781.3" x2="1605.0" y2="790" stroke="#ccd6eb" stroke-width="1"/>
<text x="1605.0" y="798" text-anchor="middle" class="xl">16. Jun</text>
<circle cx="480" cy="811" r="5.3" fill="#4572a7"/>
<text x="492" y="815" class="lg">PnL</text>
<line x1="529.8" y1="811.5" x2="544.2" y2="811.5" stroke="#c9605d" stroke-width="1"/>
<text x="549" y="815" class="lg">Benchmark return</text>
<circle cx="673.6" cy="811" r="5.3" fill="#434348"/>
<text x="685.6" y="815" class="lg">Period P&amp;L</text>
<circle cx="770.3" cy="811" r="5.3" fill="#90ed7d"/>
<text x="782.3" y="815" class="lg">Trade Vol</text>
<circle cx="861.2" cy="811" r="5.3" fill="#f7a35c"/>
<text x="873.2" y="815" class="lg">Position long</text>
<circle cx="971" cy="811" r="5.3" fill="#8085e9"/>
<text x="983" y="815" class="lg">Position short</text>
<line x1="1078" y1="811.5" x2="1093" y2="811.5" stroke="#8c7a3c" stroke-width="1"/>
<text x="1097.8" y="815" class="lg">Asset utilization</text>
<rect x="30" y="822.5" width="1590" height="18.5" fill="#c9d5e4"/>
<line x1="30" y1="823" x2="1620" y2="823" stroke="#b7c3d3" stroke-width="1.2"/>
<line x1="30" y1="841" x2="1619" y2="841" stroke="#d8dde5" stroke-width="1"/>
<line x1="144.3" y1="823" x2="144.3" y2="841" stroke="#bdc9d8" stroke-width="1"/>
<text x="148.3" y="836.5" class="nl">13. Jan</text>
<line x1="277.6" y1="823" x2="277.6" y2="841" stroke="#bdc9d8" stroke-width="1"/>
<text x="281.6" y="836.5" class="nl">27. Jan</text>
<line x1="410.8" y1="823" x2="410.8" y2="841" stroke="#bdc9d8" stroke-width="1"/>
<text x="414.8" y="836.5" class="nl">10. Feb</text>
<line x1="544.1" y1="823" x2="544.1" y2="841" stroke="#bdc9d8" stroke-width="1"/>
<text x="548.1" y="836.5" class="nl">24. Feb</text>
<line x1="677.4" y1="823" x2="677.4" y2="841" stroke="#bdc9d8" stroke-width="1"/>
<text x="681.4" y="836.5" class="nl">10. Mar</text>
<line x1="810.7" y1="823" x2="810.7" y2="841" stroke="#bdc9d8" stroke-width="1"/>
<text x="814.7" y="836.5" class="nl">24. Mar</text>
<line x1="943.9" y1="823" x2="943.9" y2="841" stroke="#bdc9d8" stroke-width="1"/>
<text x="947.9" y="836.5" class="nl">7. Apr</text>
<line x1="1077.2" y1="823" x2="1077.2" y2="841" stroke="#bdc9d8" stroke-width="1"/>
<text x="1081.2" y="836.5" class="nl">21. Apr</text>
<line x1="1210.5" y1="823" x2="1210.5" y2="841" stroke="#bdc9d8" stroke-width="1"/>
<text x="1214.5" y="836.5" class="nl">5. May</text>
<line x1="1343.7" y1="823" x2="1343.7" y2="841" stroke="#bdc9d8" stroke-width="1"/>
<text x="1347.7" y="836.5" class="nl">19. May</text>
<line x1="1477.0" y1="823" x2="1477.0" y2="841" stroke="#bdc9d8" stroke-width="1"/>
<text x="1481.0" y="836.5" class="nl">2. Jun</text>
<line x1="1610.3" y1="823" x2="1610.3" y2="841" stroke="#bdc9d8" stroke-width="1"/>
<text x="1624" y="836.5" class="nl">..</text>
<rect x="26.7" y="824.5" width="7.5" height="14" rx="1.5" fill="#f2f2f2" stroke="#999" stroke-width="1"/>
<line x1="29.4" y1="828" x2="29.4" y2="835" stroke="#888" stroke-width="1"/>
<line x1="31.5" y1="828" x2="31.5" y2="835" stroke="#888" stroke-width="1"/>
<rect x="1615.2" y="824.5" width="7.5" height="14" rx="1.5" fill="#f2f2f2" stroke="#999" stroke-width="1"/>
<line x1="1617.9" y1="828" x2="1617.9" y2="835" stroke="#888" stroke-width="1"/>
<line x1="1620.0" y1="828" x2="1620.0" y2="835" stroke="#888" stroke-width="1"/>
  <circle cx="1646" cy="789.4" r="17.2" fill="#fff" style="filter:drop-shadow(0 0 3px rgba(0,0,0,0.08))"/>
  <g stroke="#333" stroke-width="1.1"><line x1="1639.8" y1="783.6" x2="1652.6" y2="783.6"/><line x1="1646.2" y1="788" x2="1646.2" y2="795"/></g>
  <path d="M1644 789.3 L1646.2 786.4 L1648.4 789.3 Z" fill="#333"/>
</svg>
</body></html>
